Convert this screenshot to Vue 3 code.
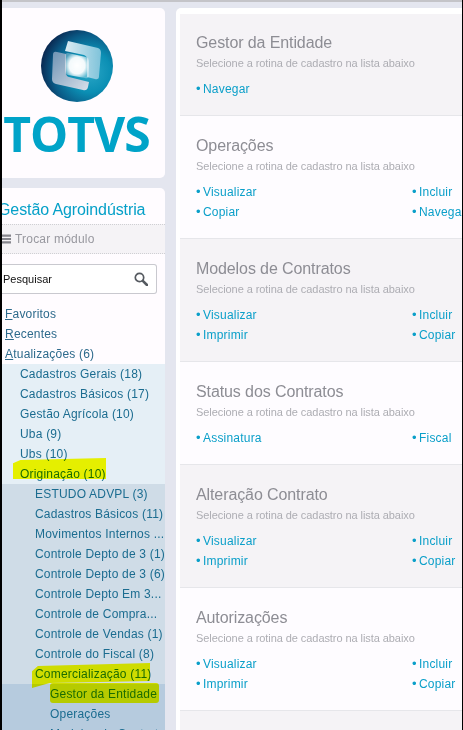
<script setup>
const level2a = ['Cadastros Gerais (18)', 'Cadastros Básicos (17)', 'Gestão Agrícola (10)', 'Uba (9)', 'Ubs (10)']
const level3 = ['ESTUDO ADVPL (3)', 'Cadastros Básicos (11)', 'Movimentos Internos ...', 'Controle Depto de 3 (1)', 'Controle Depto de 3 (6)', 'Controle Depto Em 3...', 'Controle de Compra...', 'Controle de Vendas (1)', 'Controle do Fiscal (8)']
const sub = 'Selecione a rotina de cadastro na lista abaixo'
const sections = [
  { title: 'Gestor da Entidade', links: ['Navegar'], shade: true },
  { title: 'Operações', links: ['Visualizar', 'Incluir', 'Copiar', 'Navegar'] },
  { title: 'Modelos de Contratos', links: ['Visualizar', 'Incluir', 'Imprimir', 'Copiar'], shade: true },
  { title: 'Status dos Contratos', links: ['Assinatura', 'Fiscal'] },
  { title: 'Alteração Contrato', links: ['Visualizar', 'Incluir', 'Imprimir', 'Copiar'], shade: true },
  { title: 'Autorizações', links: ['Visualizar', 'Incluir', 'Imprimir', 'Copiar'] },
  { title: '', links: [], shade: true }
]
</script>

<template>
  <div class="page">
    <aside class="side">
      <div class="card logo-card">
        <svg class="globe" width="72" height="72" viewBox="0 0 72 72">
          <defs>
            <radialGradient id="ball" cx="68%" cy="58%" r="72%">
              <stop offset="0" stop-color="#2aa6c6" />
              <stop offset="0.4" stop-color="#0b8fb4" />
              <stop offset="0.72" stop-color="#0a5a86" />
              <stop offset="1" stop-color="#0a2048" />
            </radialGradient>
            <radialGradient id="glow" cx="50%" cy="50%" r="55%">
              <stop offset="0" stop-color="#ffffff" />
              <stop offset="0.6" stop-color="#ffffff" stop-opacity="0.95" />
              <stop offset="1" stop-color="#ffffff" stop-opacity="0.3" />
            </radialGradient>
            <linearGradient id="paneL" x1="0" y1="0" x2="1" y2="1">
              <stop offset="0" stop-color="#6f93b3" />
              <stop offset="1" stop-color="#d8e0ea" />
            </linearGradient>
            <linearGradient id="paneR" x1="0" y1="0" x2="1" y2="0">
              <stop offset="0" stop-color="#dcecf3" />
              <stop offset="1" stop-color="#7fc3da" />
            </linearGradient>
            <filter id="soft"><feGaussianBlur stdDeviation="0.5" /></filter>
          </defs>
          <circle cx="36" cy="36" r="36" fill="url(#ball)" />
          <g filter="url(#soft)">
            <path d="M27 11 L57 18 Q60 19 60 23 L58 46 Q58 50 54 49 L46 47 L46 29 Q46 26 43 25 L24 21 Z" fill="url(#paneR)" />
            <path d="M12 25 Q12 21 16 22 L25 24 L25 43 Q25 46 28 47 L48 52 L47 57 Q46 61 42 60 L15 54 Q11 53 11 49 Z" fill="url(#paneL)" />
            <path d="M27 23 L45 27 Q48 28 48 31 L48 45 Q48 49 44 48 L27 45 Q24 44 24 41 L24 26 Q24 23 27 23 Z" fill="url(#glow)" />
          </g>
        </svg>
        <div class="wordmark">TOTVS</div>
      </div>

      <div class="card nav-card">
        <div class="module-name">Gestão Agroindústria</div>
        <div class="switch">
          <svg class="burger" width="9" height="10" viewBox="0 0 9 10">
            <path d="M0 0.5h9v2.2H0zM0 3.9h9v2.2H0zM0 7.3h9v2.2H0z" fill="#85858c" />
          </svg>
          <span>Trocar módulo</span>
        </div>
        <div class="search">
          <span>Pesquisar</span>
          <svg width="14" height="14" viewBox="0 0 14 14">
            <circle cx="5.5" cy="5.5" r="4.2" fill="none" stroke="#555a60" stroke-width="1.7" />
            <path d="M8.8 8.8L13 13" stroke="#555a60" stroke-width="2.6" stroke-linecap="round" />
          </svg>
        </div>
        <ul class="menu first">
          <li class="row top"><u>F</u>avoritos</li>
          <li class="row top"><u>R</u>ecentes</li>
          <li class="row top"><u>A</u>tualizações (6)</li>
        </ul>
        <ul class="menu lvl2">
          <li v-for="item in level2a" :key="item" class="row">{{ item }}</li>
          <li class="row">Originação (10)<i class="mark mark-a"></i></li>
        </ul>
        <ul class="menu lvl3">
          <li v-for="item in level3" :key="item" class="row">{{ item }}</li>
          <li class="row">Comercialização (11)<i class="mark mark-b"></i></li>
        </ul>
        <ul class="menu lvl4">
          <li class="row">Gestor da Entidade<i class="mark mark-c"></i></li>
          <li class="row">Operações</li>
          <li class="row">Modelos de Contratos</li>
        </ul>
      </div>
    </aside>

    <main class="panel">
      <section v-for="s in sections" :key="s.title" class="sec" :class="{ shade: s.shade }">
        <template v-if="s.title">
          <h2>{{ s.title }}</h2>
          <p>{{ sub }}</p>
          <div class="links">
            <a v-for="l in s.links" :key="l"><b>•</b>{{ l }}</a>
          </div>
        </template>
      </section>
    </main>
  </div>
</template>

<style>
html, body { margin: 0; height: 730px; overflow: hidden; background: #e4e6ef; }
</style>

<style scoped>
.page {
  box-sizing: border-box;
  width: 463px;
  height: 730px;
  overflow: hidden;
  display: flex;
  gap: 11px;
  padding-top: 8px;
  border-left: 2px solid #000;
  border-right: 1px solid #000;
  background: linear-gradient(#c4c4c8 0 2px, #e4e6ef 2px);
  font-family: "Liberation Sans", Arial, sans-serif;
}
.side { width: 163px; flex: none; display: flex; flex-direction: column; gap: 10px; }
.card { background: #fffcff; border-radius: 0 5px 5px 0; overflow: hidden; }
.logo-card { height: 170px; display: flex; flex-direction: column; align-items: center; }
.globe { margin-top: 22px; margin-left: -13px; }
.wordmark {
  margin-top: 9px;
  margin-left: -14px;
  font-family: "Open Sans", sans-serif;
  font-weight: 700;
  font-size: 48px;
  line-height: 46px;
  letter-spacing: -1px;
  color: #00a3c8;
}
.nav-card { flex: 1; border-radius: 0 5px 0 0; }
.module-name {
  height: 36px;
  line-height: 43px;
  margin-left: -4px;
  font-size: 16px;
  letter-spacing: -0.1px;
  color: #05a0c8;
  white-space: nowrap;
}
.switch {
  height: 28px;
  display: flex;
  align-items: center;
  gap: 4px;
  background: #f5f3f6;
  border-top: 1px dotted #cfcfd3;
  border-bottom: 1px dotted #cfcfd3;
  font-size: 12px;
  letter-spacing: 0.2px;
  color: #98989f;
}
.search {
  box-sizing: border-box;
  width: 155px;
  height: 30px;
  margin-top: 10px;
  padding: 0 8px 0 1px;
  display: flex;
  align-items: center;
  justify-content: space-between;
  background: #fff;
  border: 1px solid #c9c9cf;
  border-left: 0;
  border-radius: 0 3px 3px 0;
  font-size: 11px;
  color: #111;
}
.menu { margin: 0; padding: 0; list-style: none; }
.first { margin-top: 10px; }
.row {
  position: relative;
  height: 20px;
  line-height: 20px;
  font-size: 12px;
  letter-spacing: 0.2px;
  white-space: nowrap;
  color: #1b6c90;
}
.top { padding-left: 3px; color: #2d6a8c; }
.lvl2 { background: #e5eff6; padding-left: 18px; }
.lvl3 { background: #cfdce7; padding-left: 33px; }
.lvl4 { background: #b6cbde; padding-left: 48px; }
.mark { position: absolute; display: block; mix-blend-mode: multiply; background: #ffff00; }
.mark-a { left: -7px; top: -6px; width: 93px; height: 21px; clip-path: polygon(0 25%, 8% 10%, 100% 0, 100% 100%, 0 100%); }
.mark-b { left: -3px; top: -1px; width: 118px; height: 25px; z-index: 1; clip-path: polygon(0 33%, 5% 12%, 100% 0, 100% 72%, 15% 80%, 0 100%); }
.mark-c { left: 0; top: -1px; width: 109px; height: 20px; border-radius: 3px; }
.panel {
  flex: 1;
  min-width: 0;
  background: #fff;
  border-radius: 5px 0 0 0;
  padding: 6px 0 0 4px;
}
.sec {
  box-sizing: border-box;
  padding: 20px 0 16px 16px;
  background: #fefcff;
  border-bottom: 1px solid #e6e6ea;
  overflow: hidden;
}
.sec:first-child { padding-top: 19px; }
.sec.shade { background: #f5f3f6; }
h2 {
  margin: 0;
  height: 20px;
  line-height: 20px;
  font-size: 16px;
  font-weight: 400;
  letter-spacing: -0.1px;
  color: #8d8d94;
  white-space: nowrap;
}
p {
  margin: 3px 0 9px;
  height: 14px;
  line-height: 14px;
  font-size: 11px;
  letter-spacing: -0.07px;
  color: #adadb3;
  white-space: nowrap;
}
.links { display: grid; grid-template-columns: 216px 80px; grid-auto-rows: 20px; }
.links a { line-height: 20px; font-size: 12px; letter-spacing: 0.2px; color: #0a9fc9; white-space: nowrap; }
.links b { display: inline-block; width: 7px; font-weight: 400; font-size: 13px; letter-spacing: 0; }
</style>
